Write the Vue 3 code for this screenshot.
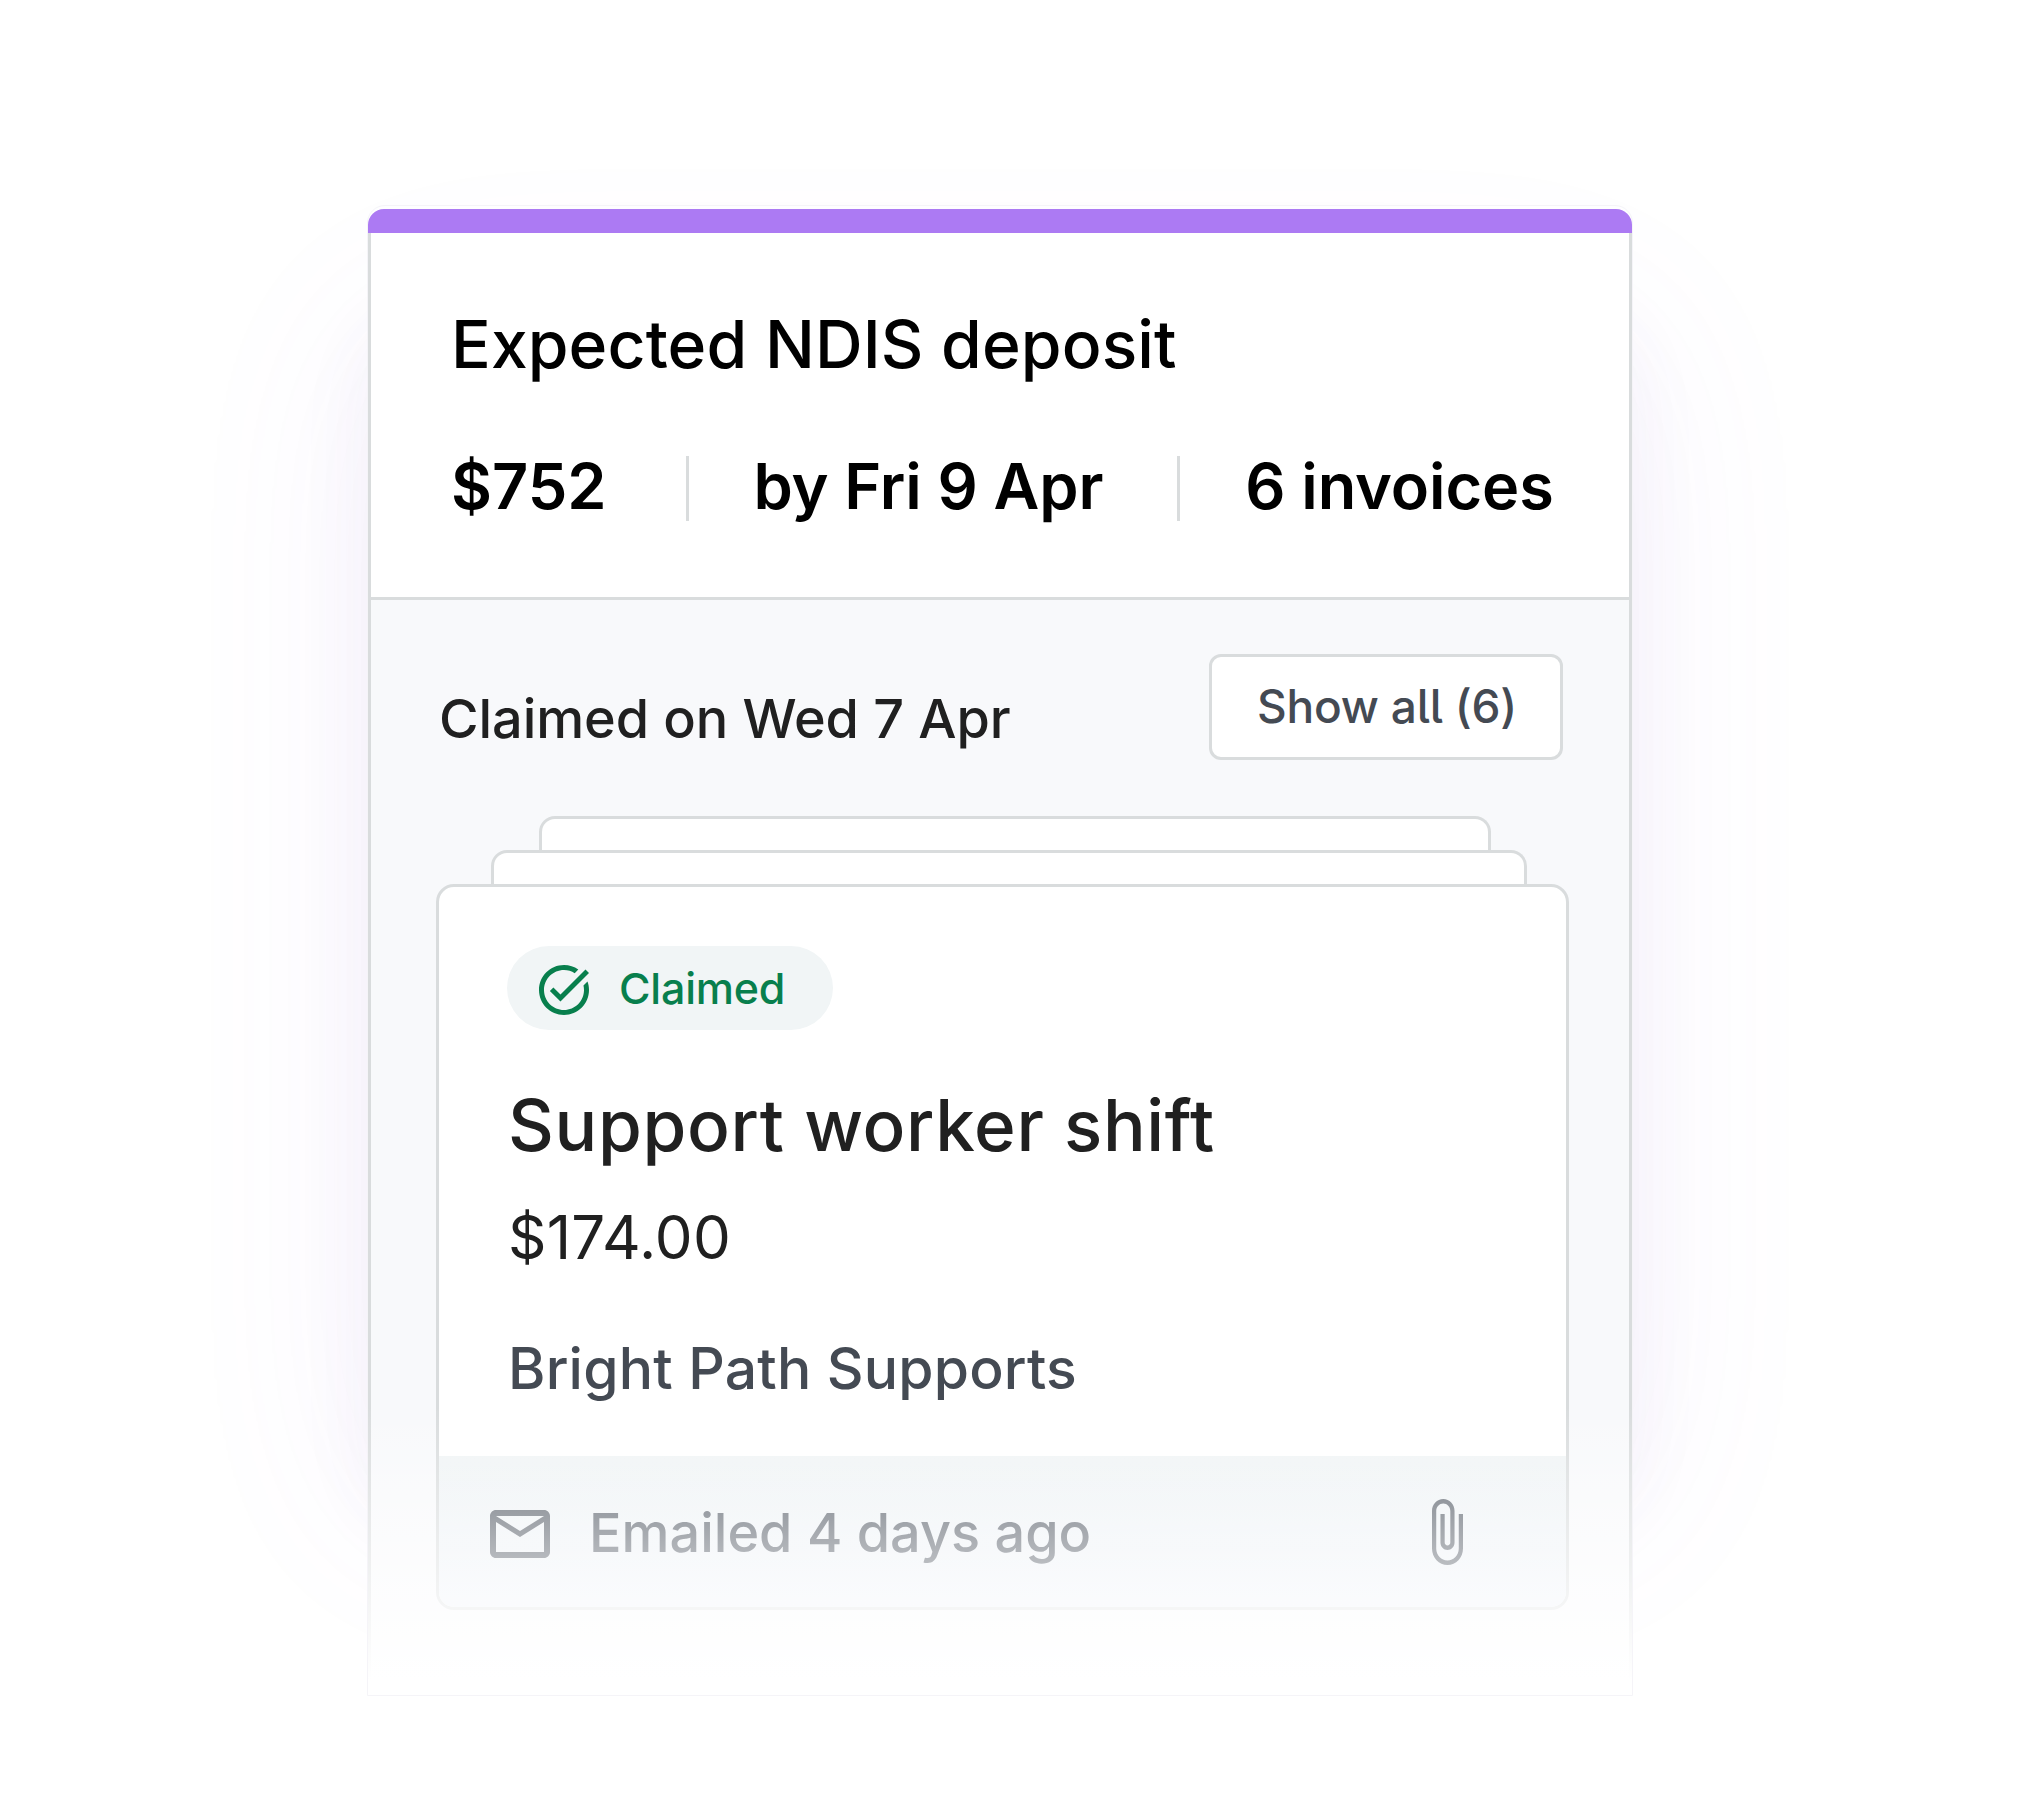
<template>
  <main class="page">
    <article class="deposit">
      <div class="glow"></div>
      <div class="accent"></div>

      <header class="summary">
        <h1>Expected NDIS deposit</h1>
        <div class="facts">
          <span v-for="fact in facts" :key="fact" class="fact">{{ fact }}</span>
        </div>
      </header>

      <section class="claims">
        <div class="claims-head">
          <h2>Claimed on Wed 7 Apr</h2>
          <button class="btn-show">Show all ({{ total }})</button>
        </div>

        <div class="sheet sheet-back"></div>
        <div class="sheet sheet-mid"></div>

        <div class="invoice">
          <div class="invoice-body">
            <span class="status">
              <svg class="icon-check" viewBox="0 0 24 24" fill="currentColor">
                <path d="M22 5.18 10.59 16.6l-4.24-4.24 1.41-1.41 2.83 2.83 10-10L22 5.18zm-2.21 5.04c.13.57.21 1.17.21 1.78 0 4.42-3.58 8-8 8s-8-3.58-8-8 3.58-8 8-8c1.58 0 3.04.46 4.28 1.25l1.44-1.44C16.1 2.67 14.13 2 12 2 6.48 2 2 6.48 2 12s4.48 10 10 10 10-4.48 10-10c0-1.19-.22-2.33-.6-3.39l-1.61 1.61z" />
              </svg>
              <span class="status-label">{{ invoice.status }}</span>
            </span>
            <h3>{{ invoice.title }}</h3>
            <p class="amount">{{ invoice.amount }}</p>
            <p class="provider">{{ invoice.provider }}</p>
          </div>

          <footer class="invoice-foot">
            <svg class="icon-mail" viewBox="0 0 24 24" fill="currentColor">
              <path d="M22 6c0-1.1-.9-2-2-2H4c-1.1 0-2 .9-2 2v12c0 1.1.9 2 2 2h16c1.1 0 2-.9 2-2V6zm-2 0-8 5-8-5h16zm0 12H4V8l8 5 8-5v10z" />
            </svg>
            <span class="emailed">{{ invoice.emailed }}</span>
            <svg class="icon-clip" viewBox="7 1 11 22" preserveAspectRatio="none" fill="currentColor">
              <path d="M16.5 6v11.5c0 2.21-1.79 4-4 4s-4-1.79-4-4V5c0-1.38 1.12-2.5 2.5-2.5s2.5 1.12 2.5 2.5v10.5c0 .55-.45 1-1 1s-1-.45-1-1V6H10v9.5c0 1.38 1.12 2.5 2.5 2.5s2.5-1.12 2.5-2.5V5c0-2.21-1.79-4-4-4S7 2.79 7 5v12.5c0 3.04 2.46 5.5 5.5 5.5s5.5-2.46 5.5-5.5V6h-1.5z" />
            </svg>
          </footer>
        </div>
      </section>

      <div class="fade"></div>
    </article>
  </main>
</template>

<script setup>
const total = 6

const facts = ['$752', 'by Fri 9 Apr', `${total} invoices`]

const invoice = {
  status: 'Claimed',
  title: 'Support worker shift',
  amount: '$174.00',
  provider: 'Bright Path Supports',
  emailed: 'Emailed 4 days ago'
}
</script>

<style>
body {
  margin: 0;
  background: #ffffff;
}
</style>

<style scoped>
.page {
  box-sizing: border-box;
  height: 1809px;
  padding: 205px 0 0 367px;
  overflow: hidden;
  isolation: isolate;
  font-family: Inter, sans-serif;
  color: #202020;
}
.page * { box-sizing: border-box; }
h1, h2, h3, p { margin: 0; white-space: nowrap; }

.deposit {
  position: relative;
  width: 1266px;
  height: 1491px;
  padding-top: 3px;
  border: 1px solid #f5f4f8;
  border-radius: 18px 18px 0 0;
}
/* soft purple glow, mostly out of the two sides */
.glow {
  position: absolute;
  z-index: -1;
  inset: 120px 0 180px;
  border-radius: 60px;
  box-shadow: 0 0 200px rgba(165, 110, 245, 0.075), 0 0 80px rgba(90, 60, 150, 0.055);
}
.accent {
  height: 24px;
  background: #ac7af3;
  border-radius: 16px 16px 0 0;
}

.summary {
  height: 367px;
  padding: 71px 0 0 80px;
  background: #ffffff;
  border: 3px solid #d9dcdd;
  border-top: none;
}
h1 {
  font-size: 66px;
  line-height: 80px;
  font-weight: 500;
  letter-spacing: 0.08px;
  color: #000000;
}
.facts {
  display: flex;
  margin-top: 72px;
  height: 65px;
  line-height: 61px;
  font-size: 63px;
  font-weight: 600;
  color: #000000;
}
.fact + .fact {
  margin-left: 79px;
  padding-left: 65px;
  border-left: 3px solid #d9dcdd;
  letter-spacing: -0.1px;
}
.fact + .fact + .fact { margin-left: 74px; }

.claims {
  height: 1095px;
  padding: 54px 61px 0 65px;
  background: #f8f9fb;
  border: 3px solid #d9dcdd;
  border-top: none;
  border-bottom: none;
}
.claims-head {
  display: flex;
  justify-content: space-between;
  height: 162px;
  padding: 0 5px 0 3px;
}
h2 {
  padding-top: 33px;
  font-size: 54px;
  line-height: 64px;
  font-weight: 500;
  letter-spacing: -0.08px;
}
.btn-show {
  width: 354px;
  height: 106px;
  padding: 0 0 2px 2px;
  font-family: inherit;
  font-size: 46px;
  font-weight: 500;
  font-feature-settings: 'cv05';
  letter-spacing: -0.2px;
  color: #444a53;
  background: #ffffff;
  border: 3px solid #d9dcdd;
  border-radius: 12px;
}

.sheet {
  height: 34px;
  background: #ffffff;
  border: 3px solid #d9dcdd;
  border-bottom: none;
  border-radius: 16px 16px 0 0;
}
.sheet-back { margin: 0 77px 0 103px; }
.sheet-mid { margin: 0 41px 0 55px; }

.invoice {
  width: 1133px;
  height: 726px;
  background: #ffffff;
  border: 3px solid #d9dcdd;
  border-radius: 18px;
}
.invoice-body {
  height: 569px;
  padding: 59px 0 0 68px;
}
.status {
  display: flex;
  align-items: center;
  width: 326px;
  height: 84px;
  padding-left: 27px;
  border-radius: 42px;
  background: #f1f5f6;
  color: #087f4d;
}
.icon-check { width: 60px; height: 60px; margin-top: 3px; }
.status-label {
  margin-left: 25px;
  font-size: 43px;
  font-weight: 500;
  letter-spacing: -0.2px;
}
h3 {
  margin: 52px 0 0 1px;
  font-size: 71px;
  line-height: 86px;
  font-weight: 500;
  letter-spacing: 0.65px;
}
.amount {
  margin: 33px 0 0 1px;
  font-size: 60px;
  line-height: 72px;
  letter-spacing: 0.2px;
}
.provider {
  margin: 61px 0 0 1px;
  font-size: 57px;
  line-height: 70px;
  font-weight: 500;
  letter-spacing: 0.2px;
  color: #444a53;
}
.invoice-foot {
  display: flex;
  align-items: center;
  height: 151px;
  padding: 0 103px 0 45px;
  background: linear-gradient(#f0f4f5, #eef2f8);
  border-radius: 0 0 15px 15px;
  color: #5a616b;
}
.icon-mail { width: 72px; height: 72px; margin-top: 4px; }
.emailed {
  margin: 2px 0 0 33px;
  font-size: 54px;
  font-weight: 500;
}
.icon-clip {
  width: 31px;
  height: 66px;
  margin-left: auto;
}

/* fades the bottom of the card out to white */
.fade {
  position: absolute;
  left: 0;
  right: 0;
  bottom: 0;
  height: 290px;
  background: linear-gradient(rgba(255, 255, 255, 0), rgba(255, 255, 255, 0.55) 52%, #ffffff 95%);
}
</style>
